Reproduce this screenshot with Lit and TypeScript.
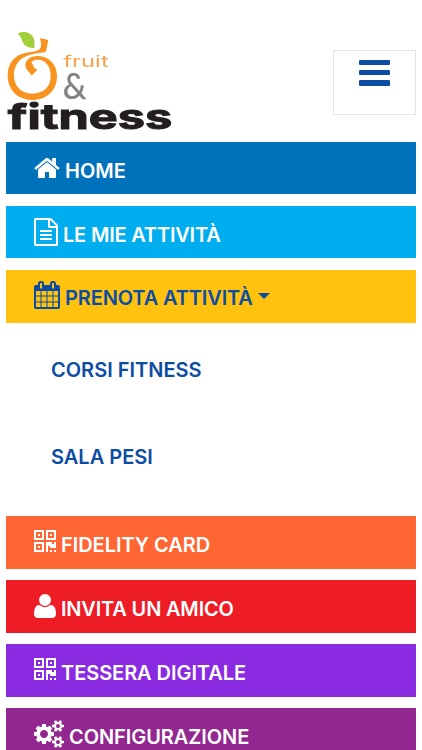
import { LitElement, html, svg, css } from "lit";
import { customElement } from "lit/decorators.js";

interface Icon { box: string; width: number; path: string; }

const smallCog = "v140q0 16-149 31-12 27-30 52 51 113 51 138 0 4-4 7-122 71-124 71-8 0-46-47t-52-68q-20 2-30 2t-30-2q-14 21-52 68t-46 47q-2 0-124-71-4-3-4-7 0-25 51-138-18-25-30-52-149-15-149-31v-140q0-16 149-31 13-29 30-52-51-113-51-138 0-4 4-7 4-2 35-20t59-34 30-16q8 0 46 46.5t52 67.5q20-2 30-2t30 2q51-71 92-112l6-2q4 0 124 70 4 3 4 7 0 25-51 138 17 23 30 52 149 15 149 31z";

const icons: Record<string, Icon> = {
  home: { box: "64 0 1664 1792", width: 26, path: "M1472 992v480q0 26-19 45t-45 19h-384v-384h-256v384h-384q-26 0-45-19t-19-45v-480q0-1 .5-3t.5-3l575-474 575 474q1 2 1 6zm223-69l-62 74q-8 9-21 11h-3q-13 0-21-7l-692-577-692 577q-12 8-24 7-13-2-21-11l-62-74q-8-10-7-23.5t11-21.5l719-599q32-26 76-26t76 26l244 204v-195q0-14 9-23t23-9h192q14 0 23 9t9 23v408l219 182q10 8 11 21.5t-7 23.5z" },
  file: { box: "128 0 1536 1792", width: 24, path: "M1596 380q28 28 48 76t20 88v1152q0 40-28 68t-68 28h-1344q-40 0-68-28t-28-68v-1600q0-40 28-68t68-28h896q40 0 88 20t76 48zm-444-244v376h376q-10-29-22-41l-313-313q-12-12-41-22zm384 1528v-1024h-416q-40 0-68-28t-28-68v-416h-768v1536h1280zm-1024-864q0-14 9-23t23-9h704q14 0 23 9t9 23v64q0 14-9 23t-23 9h-704q-14 0-23-9t-9-23v-64zm736 224q14 0 23 9t9 23v64q0 14-9 23t-23 9h-704q-14 0-23-9t-9-23v-64q0-14 9-23t23-9h704zm0 256q14 0 23 9t9 23v64q0 14-9 23t-23 9h-704q-14 0-23-9t-9-23v-64q0-14 9-23t23-9h704z" },
  calendar: { box: "64 0 1664 1792", width: 26, path: "M192 1664h288v-288h-288v288zm352 0h320v-288h-320v288zm-352-352h288v-320h-288v320zm352 0h320v-320h-320v320zm-352-384h288v-288h-288v288zm736 736h320v-288h-320v288zm-384-736h320v-288h-320v288zm768 736h288v-288h-288v288zm-384-352h320v-320h-320v320zm-352-864v-288q0-13-9.5-22.5t-22.5-9.5h-64q-13 0-22.5 9.5t-9.5 22.5v288q0 13 9.5 22.5t22.5 9.5h64q13 0 22.5-9.5t9.5-22.5zm736 864h288v-320h-288v320zm-384-384h320v-288h-320v288zm384 0h288v-288h-288v288zm32-480v-288q0-13-9.5-22.5t-22.5-9.5h-64q-13 0-22.5 9.5t-9.5 22.5v288q0 13 9.5 22.5t22.5 9.5h64q13 0 22.5-9.5t9.5-22.5zm384-64v1280q0 52-38 90t-90 38h-1408q-52 0-90-38t-38-90v-1280q0-52 38-90t90-38h128v-96q0-66 47-113t113-47h64q66 0 113 47t47 113v96h384v-96q0-66 47-113t113-47h64q66 0 113 47t47 113v96h128q52 0 90 38t38 90z" },
  qrcode: { box: "192 0 1408 1792", width: 22, path: "M576 1152v128h-128v-128h128zm0-768v128h-128v-128h128zm768 0v128h-128v-128h128zm-1024 1023h384v-383h-384v383zm0-767h384v-384h-384v384zm768 0h384v-384h-384v384zm-256 256v640h-640v-640h640zm512 512v128h-128v-128h128zm256 0v128h-128v-128h128zm0-512v384h-384v-128h-128v384h-128v-640h384v128h128v-128h128zm-768-768v640h-640v-640h640zm768 0v640h-640v-640h640z" },
  user: { box: "192 0 1408 1792", width: 22, path: "M1600 1405q0 120-73 189.5t-194 69.5h-874q-121 0-194-69.5t-73-189.5q0-53 3.5-103.5t14-109 26.5-108.5 43-97.5 62-81 85.5-53.5 111.5-20q9 0 42 21.5t74.5 48 108 48 133.5 21.5 133.5-21.5 108-48 74.5-48 42-21.5q61 0 111.5 20t85.5 53.5 62 81 43 97.5 26.5 108.5 14 109 3.5 103.5zm-320-893q0 159-112.5 271.5t-271.5 112.5-271.5-112.5-112.5-271.5 112.5-271.5 271.5-112.5 271.5 112.5 112.5 271.5z" },
  cogs: { box: "-64 0 1920 1792", width: 30, path: "M832 896q0-106-75-181t-181-75-181 75-75 181 75 181 181 75 181-75 75-181zm768 512q0-52-38-90t-90-38-90 38-38 90q0 53 37.5 90.5t90.5 37.5 90.5-37.5 37.5-90.5zm0-1024q0-52-38-90t-90-38-90 38-38 90q0 53 37.5 90.5t90.5 37.5 90.5-37.5 37.5-90.5zm-384 421v185q0 10-7 19.5t-16 10.5l-155 24q-11 35-32 76 34 48 90 115 7 11 7 20 0 12-7 19-23 30-82.5 89.5t-78.5 59.5q-11 0-21-7l-115-90q-37 19-77 31-11 108-23 155-7 24-30 24h-186q-11 0-20-7.5t-10-17.5l-23-153q-34-10-75-31l-118 89q-7 7-20 7-11 0-21-8-144-133-144-160 0-9 7-19 10-14 41-53t47-61q-23-44-35-82l-152-24q-10-1-17-9.5t-7-19.5v-185q0-10 7-19.5t16-10.5l155-24q11-35 32-76-34-48-90-115-7-11-7-20 0-12 7-20 22-30 82-89t79-59q11 0 21 7l115 90q34-18 77-32 11-108 23-154 7-24 30-24h186q11 0 20 7.5t10 17.5l23 153q34 10 75 31l118-89q8-7 20-7 11 0 21 8 144 133 144 160 0 8-7 19-12 16-42 54t-45 60q23 48 34 82l152 23q10 2 17 10.5t7 19.5zM1856 1338" + smallCog + "M1856 314" + smallCog },
};

@customElement("app-root")
export class AppRoot extends LitElement {
  static styles = css`
    :host { display: block; height: 750px; overflow: hidden; background: #fff; font-family: Inter, "Liberation Sans", sans-serif; color: #0c4ca3; }
    .page { padding: 24px 6px 0; }
    header { display: flex; justify-content: space-between; align-items: flex-start; height: 117.5px; }
    .logo { display: block; margin-left: -6px; filter: blur(0.5px); overflow: visible; }
    .toggle { box-sizing: border-box; width: 83px; height: 65px; margin-top: 25.5px; padding: 9px 25px; border: 1px solid #e6e6e6; background: #fff; display: flex; flex-direction: column; gap: 5.3px; }
    .line { height: 5.2px; border-radius: 1.3px; background: #0c4ca3; flex: none; width: 31px; }
    nav { display: flex; flex-direction: column; gap: 11.2px; }
    .item { box-sizing: border-box; height: 52.9px; padding: 12px 28px 0; display: flex; align-items: flex-start; color: #fff; flex: none; }
    .icon { display: block; flex: none; fill: currentColor; }
    .label { font-size: 20px; font-weight: 600; line-height: 24px; white-space: nowrap; margin-top: 5px; }
    .item .label { margin-left: 5px; }
    .home { background: #0072bc; }
    .mine { background: #00aeef; }
    .mine .label { letter-spacing: -0.19px; }
    .book { background: #ffc20e; color: #0c4ca3; padding-top: 11px; }
    .book .label { letter-spacing: -0.13px; }
    .fidelity { background: #ff6633; }
    .fidelity .label { letter-spacing: -0.04px; }
    .invite { background: #ee1c25; }
    .invite .label { letter-spacing: -0.18px; }
    .card { background: #8a2be2; }
    .card .label, .config .label { letter-spacing: -0.06px; }
    .config { background: #92278f; }
    .caret { margin: 12px 0 0 5px; border: 6px solid transparent; border-top-color: currentColor; border-bottom: 0; }
    .sub { height: 171.3px; padding: 24.2px 45px 0; display: flex; flex-direction: column; gap: 63.5px; box-sizing: border-box; }
    .sub .label { margin: 0; }
  `;

  private icon(name: string) {
    const i = icons[name];
    return html`<svg class="icon" width=${i.width} height="28" viewBox=${i.box}>${svg`<path d=${i.path} />`}</svg>`;
  }

  private item(kind: string, icon: string, text: string) {
    return html`<div class="item ${kind}">${this.icon(icon)}<span class="label">${text}</span></div>`;
  }

  render() {
    return html`<div class="page">
      <header>
        <svg class="logo" width="180" height="112" viewBox="0 0 540 336">
          <path fill="#a0cf3a" d="M53 29C66 20 91 24 99 39C105 50 103 62 103 72C85 73 70 65 66 49C64 40 59 34 53 29Z" />
          <path fill="#f7931e" d="M120 42L145 48C141 62 142 76 136 85C118 87 96 89 80 96C55 106 42 126 42 154C42 187 64 209 96 209C130 209 152 189 152 157C152 130 140 112 121 108C108 106 98 109 94 116C99 121 101 125 101 130L112 137L95 155C89 143 77 139 76 123C77 106 93 96 114 96C149 97 171 123 171 156C171 199 141 228 97 228C52 228 23 197 23 154C23 120 41 96 72 88C90 83 111 84 119 75C127 66 122 54 120 42Z" />
          <text x="190" y="129" font-family="Inter, sans-serif" font-size="45" fill="#f7a14a" textLength="136" lengthAdjust="spacingAndGlyphs">fruit</text>
          <text x="188" y="225" font-family="Lato, sans-serif" font-size="108" fill="#808285" stroke="#808285" stroke-width="1" textLength="71" lengthAdjust="spacingAndGlyphs">&amp;</text>
          <text x="23" y="316" font-family="Inter, sans-serif" font-weight="700" font-size="103" fill="#231f20" stroke="#231f20" stroke-width="3" textLength="494" lengthAdjust="spacingAndGlyphs">fitness</text>
        </svg>
        <div class="toggle"><div class="line"></div><div class="line"></div><div class="line"></div></div>
      </header>
      <nav>
        ${this.item("home", "home", "HOME")}
        ${this.item("mine", "file", "LE MIE ATTIVITÀ")}
        <div class="item book">${this.icon("calendar")}<span class="label">PRENOTA ATTIVITÀ</span><span class="caret"></span></div>
        <div class="sub"><span class="label">CORSI FITNESS</span><span class="label">SALA PESI</span></div>
        ${this.item("fidelity", "qrcode", "FIDELITY CARD")}
        ${this.item("invite", "user", "INVITA UN AMICO")}
        ${this.item("card", "qrcode", "TESSERA DIGITALE")}
        ${this.item("config", "cogs", "CONFIGURAZIONE")}
      </nav>
    </div>`;
  }
}
